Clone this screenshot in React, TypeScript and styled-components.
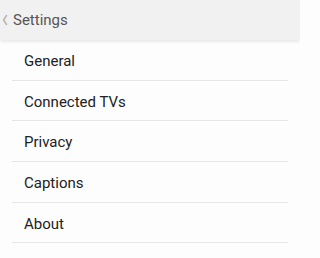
import React from 'react'
import styled, { createGlobalStyle } from 'styled-components'

const GlobalStyle = createGlobalStyle`
  html, body {
    margin: 0;
    padding: 0;
    background: #fdfdfd;
    font-family: Roboto, "Liberation Sans", sans-serif;
  }
`

const items = ['General', 'Connected TVs', 'Privacy', 'Captions', 'About']

const App: React.FC = () => (
  <>
    <GlobalStyle />
    <Page>
      <Header>
        <BackChevron viewBox="0 0 6 12">
          <path d="M4.8 1 L1.6 6 L4.8 11" fill="none" stroke="#b5b5b5" strokeWidth="1.5" />
        </BackChevron>
        <Title>Settings</Title>
      </Header>
      <List>
        {items.map((item) => (
          <Row key={item}>{item}</Row>
        ))}
      </List>
    </Page>
  </>
)

export default App

const Page = styled.div`
  width: 300px;
  height: 258px;
  background: #fdfdfd;
  overflow: hidden;
`

const Header = styled.div`
  position: relative;
  display: flex;
  align-items: center;
  height: 40px;
  padding-left: 2px;
  background: #f1f1f1;
  box-shadow: 0 1px 4px rgba(0, 0, 0, 0.12);
  z-index: 1;
`

const BackChevron = styled.svg`
  width: 6px;
  height: 12px;
  margin-right: 5px;
`

const Title = styled.div`
  color: #555;
  font-size: 15px;
`

const List = styled.div`
  padding: 0 12px;
`

const Row = styled.div`
  box-sizing: border-box;
  height: 40.7px;
  padding-top: 2px;
  padding-left: 12px;
  display: flex;
  align-items: center;
  color: #222;
  font-size: 15px;
  border-bottom: 1px solid #e6e6e6;
`
